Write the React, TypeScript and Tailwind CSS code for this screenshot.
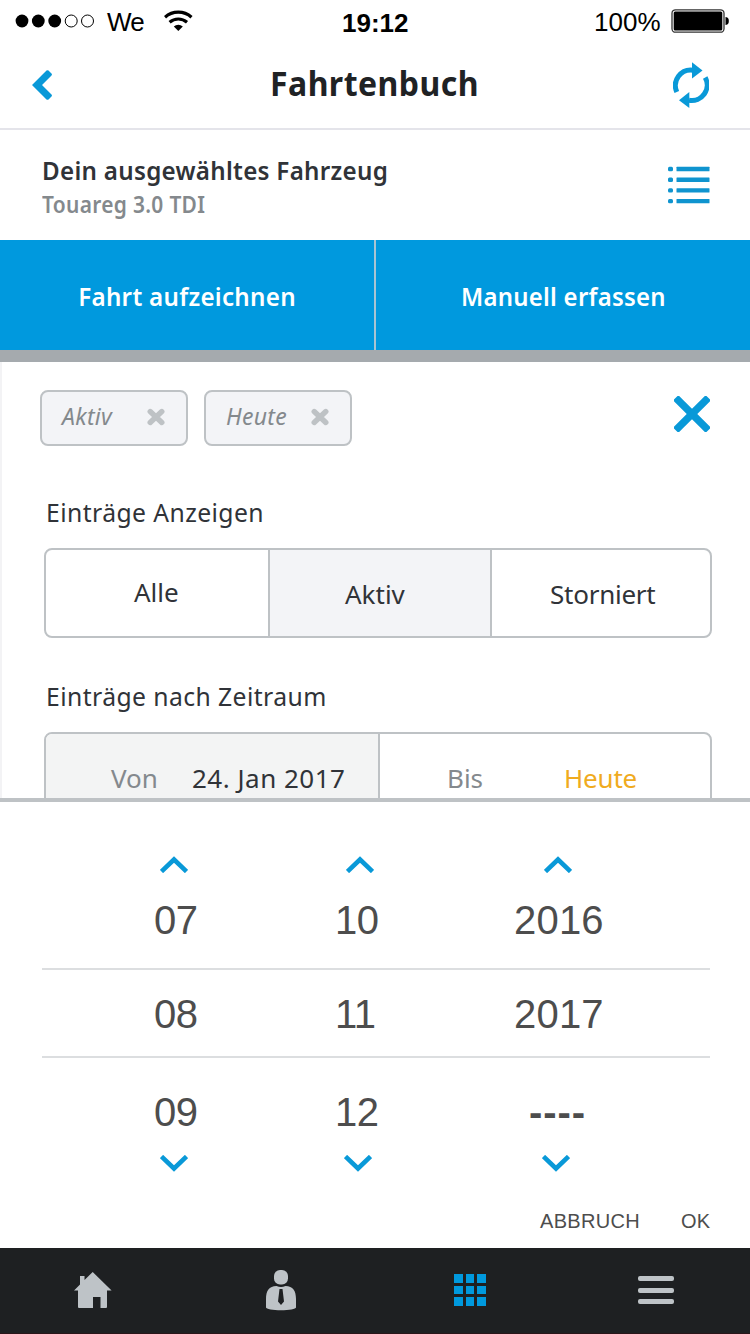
import type { ReactNode } from "react";

const Chevron = ({ down = false, className = "" }: { down?: boolean; className?: string }) => (
  <svg viewBox="0 0 28 18" className={`block w-7 h-[18px] ${className}`} fill="none" stroke="#0999d8" strokeWidth="4.6">
    {down ? <path d="M1.5 1.5 14 13.5 26.5 1.5" /> : <path d="M1.5 16.5 14 4.5 26.5 16.5" />}
  </svg>
);

const StatusBar = () => (
  <div className="h-11 flex items-start font-['Liberation_Sans',sans-serif] text-[26px] leading-[44px] text-black">
    <svg viewBox="0 0 80 14" className="w-20 h-3.5 ml-[15px] mt-3.5">
      <circle cx="7" cy="7" r="6.4" />
      <circle cx="23.3" cy="7" r="6.4" />
      <circle cx="39.7" cy="7" r="6.4" />
      <circle cx="56.2" cy="7" r="6" fill="none" stroke="black" />
      <circle cx="72.5" cy="7" r="6" fill="none" stroke="black" />
    </svg>
    <span className="ml-3 w-[57px] tracking-[-0.8px]">We</span>
    <svg viewBox="0 0 30 22" className="w-[30px] h-[22px] mt-2.5" fill="none" stroke="black" strokeWidth="3.2">
      <path d="M1 7.2A20 20 0 0 1 27.5 7.2" />
      <path d="M5.6 12.2A13.5 13.5 0 0 1 23 12.2" />
      <path d="M9.8 16.5A7 7 0 0 1 18.8 16.5L14.3 21Z" fill="black" stroke="none" />
    </svg>
    <span className="ml-[148px] w-[252px] mt-px font-bold">19:12</span>
    <span className="w-[77px]">100%</span>
    <svg viewBox="0 0 60 26" className="w-[60px] h-[26px] mt-2">
      <rect x="1" y="1.8" width="52" height="22.4" rx="3.5" fill="none" stroke="#333" strokeWidth="1.3" />
      <rect x="2.7" y="3.5" width="48.6" height="19" rx="1.5" />
      <path d="M54.5 9c3 .5 3.3 2.3 3.3 4s-.3 3.5-3.3 4z" />
    </svg>
  </div>
);

const Header = () => (
  <div className="h-[86px] flex items-start border-b-2 border-[#e4e4ea]">
    <svg viewBox="0 0 20 30" className="w-5 h-[30px] ml-8 mt-[26px]" fill="#0999d8">
      <path d="M0 15 14.5.6a1.5 1.5 0 0 1 2 0l3 3a1.5 1.5 0 0 1 0 2L10 15l9.5 9.4a1.5 1.5 0 0 1 0 2l-3 3a1.5 1.5 0 0 1-2 0z" />
    </svg>
    <h1 className="ml-[218px] w-[403px] mt-[17px] text-[34px] leading-[44px] origin-left scale-x-94 tracking-[0.5px] font-bold text-[#202224]">Fahrtenbuch</h1>
    <svg viewBox="0 0 36 46" className="w-9 h-[46px] mt-[18px]" fill="none" stroke="#0999d8" strokeWidth="5">
      <path d="M3.8 30A15.5 15.5 0 0 1 20 8.2" />
      <path d="M32.2 15.5A15.5 15.5 0 0 1 16 38.3" />
      <path d="M19 .2 29.5 8.5 19 16.5z" fill="#0999d8" stroke="none" />
      <path d="M16.3 30 6 38.2 16.3 46z" fill="#0999d8" stroke="none" />
    </svg>
  </div>
);

const Vehicle = () => (
  <div className="h-[110px] flex justify-between pl-[42px] pr-10 font-semibold">
    <div className="pt-[23px]">
      <p className="text-[26px] leading-[34px] origin-left scale-x-93 tracking-[0.3px] text-[#303338] whitespace-nowrap">Dein ausgewähltes Fahrzeug</p>
      <p className="text-[23px] leading-[34px] origin-left scale-x-91 tracking-[0.35px] text-[#84898d]">Touareg 3.0 TDI</p>
    </div>
    <svg viewBox="0 0 42 38" className="w-[42px] h-[38px] mt-9" fill="#0f94cf">
      {[0.8, 11.5, 22.2, 32.9].map((y) => (
        <g key={y}>
          <rect x="0" y={y} width="5" height="4.4" rx="1.5" />
          <rect x="8.5" y={y} width="33" height="4.4" rx=".5" />
        </g>
      ))}
    </svg>
  </div>
);

const Chip = ({ children }: { children: ReactNode }) => (
  <div className="w-[148px] h-14 flex items-start justify-between pl-5 pr-[21px] border-2 border-[#bec2c5] rounded-lg bg-[#f3f4f7]">
    <span className="text-[23px] leading-[46px] mt-px italic tracking-[0.3px] text-[#84898d]">{children}</span>
    <svg viewBox="0 0 18 18" className="w-[18px] h-[18px] mt-4" fill="none" stroke="#bec2c5" strokeWidth="5.4" strokeLinecap="round">
      <path d="M3.2 3.5 14.8 14.5M14.8 3.5 3.2 14.5" />
    </svg>
  </div>
);

const Filter = () => (
  <div className="h-[436px] overflow-hidden pt-7 px-[38px] border-l-2 border-[#f3f3f5] text-[26px] leading-[34px] text-[#303338]">
    <div className="h-14 flex gap-4">
      <Chip>Aktiv</Chip>
      <Chip>Heute</Chip>
      <svg viewBox="0 0 36 36" className="w-9 h-9 ml-auto mt-1.5 mr-0.5" fill="#0999d8">
        <rect x="-5" y="14.3" width="46" height="7.4" rx="1.5" transform="rotate(45 18 18)" />
        <rect x="-5" y="14.3" width="46" height="7.4" rx="1.5" transform="rotate(-45 18 18)" />
      </svg>
    </div>
    <p className="mt-[49px] ml-1.5 origin-left scale-x-95 tracking-[0.45px]">Einträge Anzeigen</p>
    <div className="mt-[19px] ml-1 w-[668px] h-[90px] flex border-2 border-[#bec2c5] rounded-lg overflow-hidden">
      <div className="w-[222px] pt-[25px] pl-[88px]">Alle</div>
      <div className="w-[224px] pt-[27px] pl-[75px] bg-[#f3f4f7] border-x-2 border-[#bec2c5]">Aktiv</div>
      <div className="pt-[27px] pl-[58px] tracking-[-0.25px]">Storniert</div>
    </div>
    <p className="mt-[41px] ml-1.5 origin-left scale-x-95 tracking-[0.45px]">Einträge nach Zeitraum</p>
    <div className="mt-[19px] ml-1 w-[668px] h-[90px] flex border-2 border-[#bec2c5] rounded-lg overflow-hidden">
      <div className="w-[334px] pt-[27px] pl-[65px] flex bg-[#f3f4f4] border-r-2 border-[#bec2c5]">
        <span className="w-[81px] text-[#84898d]">Von</span>
        <span className="whitespace-nowrap tracking-[0.5px]">24. Jan 2017</span>
      </div>
      <div className="pt-[27px] pl-[67px] flex">
        <span className="w-[117px] text-[#84898d]">Bis</span>
        <span className="tracking-[-0.2px] text-[#f0ab1e]">Heute</span>
      </div>
    </div>
  </div>
);

const Picker = () => (
  <div className="h-[450px] border-t-4 border-[#bec2c5] pl-[42px] pr-10 font-['Liberation_Sans',sans-serif] text-[40px] leading-[48px] text-[#4d4d4d]">
    <div className="h-[18px] mt-[53px] flex">
      <Chevron className="ml-[118px]" />
      <Chevron className="ml-[158px]" />
      <Chevron className="ml-[170px]" />
    </div>
    <div className="h-[97px] pt-[23px] pl-28 flex border-b-2 border-[#dcdee0]">
      <span className="w-[181px] tracking-[-0.5px]">07</span>
      <span className="w-[179px] tracking-[-0.5px]">10</span>
      <span className="tracking-[0.2px]">2016</span>
    </div>
    <div className="h-[88px] pt-5 pl-28 flex border-b-2 border-[#dcdee0]">
      <span className="w-[181px] tracking-[-0.5px]">08</span>
      <span className="w-[179px] tracking-[-0.5px]">11</span>
      <span className="tracking-[0.2px]">2017</span>
    </div>
    <div className="h-[97px] pt-[30px] pl-28 flex">
      <span className="w-[181px] tracking-[-0.5px]">09</span>
      <span className="w-[194px] tracking-[-0.5px]">12</span>
      <span className="font-bold tracking-[0.9px]">----</span>
    </div>
    <div className="h-[18px] flex">
      <Chevron down className="ml-[118px]" />
      <Chevron down className="ml-[156px]" />
      <Chevron down className="ml-[170px]" />
    </div>
    <div className="mt-[34px] pl-[498px] flex text-xl leading-[28px]">
      <button className="w-[142px] text-left tracking-[0.3px]">ABBRUCH</button>
      <button>OK</button>
    </div>
  </div>
);

const TabBar = () => (
  <div className="h-[86px] flex items-start pl-[74px] bg-[#1e2022] border-b border-[#2a1519]">
    <svg viewBox="0 0 38 36" className="w-[38px] h-9 mt-6" fill="#bec3c7">
      <path d="M0 18.5 6 12.5V4h4.5v4L18.7 0 37.6 18.5H33V35a1 1 0 0 1-1 1h-5.5V25H19v11H5a1 1 0 0 1-1-1V18.5z" />
    </svg>
    <svg viewBox="0 0 30 42" className="w-[30px] h-[42px] ml-[154px] mt-[21px]" fill="#bec3c7">
      <rect x="8" y="1" width="14" height="14.5" rx="6" />
      <path fillRule="evenodd" d="M0 38.5V30C0 22 3 17 10.5 17c3 1.2 6 1.2 9 0C27 17 30 22 30 30v8.5c0 1.5-7 2.8-15 2.8S0 40 0 38.5zM13.5 20 12 32.5 15 36l3-3.5L16.500 20z" />
    </svg>
    <div className="grid grid-cols-3 gap-[3px] w-8 h-8 ml-[158px] mt-[26px]">
      {Array.from({ length: 9 }, (_, i) => (
        <div key={i} className="bg-[#0099de]" />
      ))}
    </div>
    <div className="w-9 ml-[152px] mt-7 flex flex-col gap-[6.5px]">
      <div className="h-[5px] rounded-xs bg-[#bec3c7]" />
      <div className="h-[5px] rounded-xs bg-[#bec3c7]" />
      <div className="h-[5px] rounded-xs bg-[#bec3c7]" />
    </div>
  </div>
);

export default function App() {
  return (
    <div className="w-[750px] h-[1334px] overflow-hidden bg-white font-['Noto_Sans',sans-serif]">
      <StatusBar />
      <Header />
      <Vehicle />
      {/* Primary actions */}
      <div className="h-[122px] flex border-b-[12px] border-[#a5aaae] bg-[#0099de] text-[26px] leading-[34px] font-semibold text-white">
        <button className="w-[376px] border-r-2 border-[#a9c4d2] pt-0.5">
          <span className="inline-block scale-x-93 tracking-[0.3px]">Fahrt aufzeichnen</span>
        </button>
        <button className="flex-1 pt-0.5">
          <span className="inline-block scale-x-92 tracking-[0.3px]">Manuell erfassen</span>
        </button>
      </div>
      <Filter />
      <Picker />
      <TabBar />
    </div>
  );
}
